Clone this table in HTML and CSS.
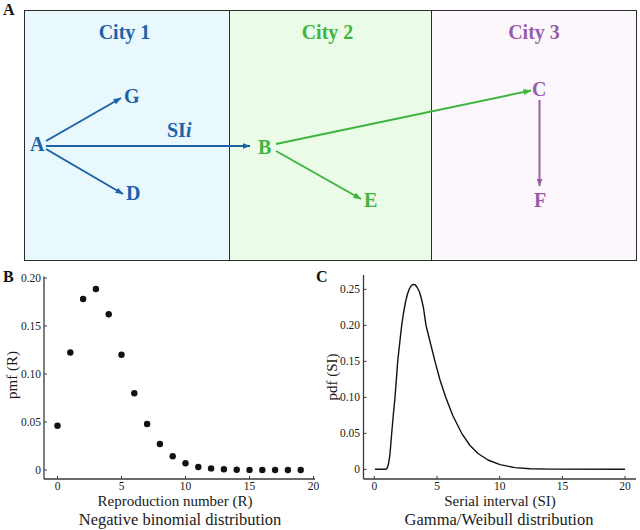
FILE: index.html
```html
<!DOCTYPE html>
<html lang="en">
<head>
<meta charset="utf-8">
<title>Transmission model figure</title>
<link rel="stylesheet" href="styles.css">
</head>
<body>
<div class="figure">
  <section class="panel-a">
    <div class="panel-label">A</div>
    <div class="cities">
      <div class="city city-1"><h2 class="city-title">City 1</h2></div>
      <div class="city city-2"><h2 class="city-title">City 2</h2></div>
      <div class="city city-3"><h2 class="city-title">City 3</h2></div>
    </div>
    <svg class="network" viewBox="0 0 640 265" xmlns="http://www.w3.org/2000/svg">
      <defs>
        <marker id="mb" markerUnits="userSpaceOnUse" markerWidth="8" markerHeight="6" refX="7.5" refY="3" orient="auto"><path d="M0,0 L8,3 L0,6 z" class="head-blue"/></marker>
        <marker id="mg" markerUnits="userSpaceOnUse" markerWidth="8" markerHeight="6" refX="7.5" refY="3" orient="auto"><path d="M0,0 L8,3 L0,6 z" class="head-green"/></marker>
        <marker id="mp" markerUnits="userSpaceOnUse" markerWidth="8" markerHeight="6" refX="7.5" refY="3" orient="auto"><path d="M0,0 L8,3 L0,6 z" class="head-purple"/></marker>
      </defs>
      <line class="edge edge-blue" x1="46" y1="141" x2="121" y2="98" marker-end="url(#mb)"/>
      <line class="edge edge-blue" x1="46" y1="149" x2="123" y2="194" marker-end="url(#mb)"/>
      <line class="edge edge-blue" x1="46" y1="146" x2="250" y2="146" marker-end="url(#mb)"/>
      <line class="edge edge-green" x1="276" y1="144" x2="531" y2="90.5" marker-end="url(#mg)"/>
      <line class="edge edge-green" x1="276" y1="151" x2="361" y2="199" marker-end="url(#mg)"/>
      <line class="edge edge-purple" x1="539.5" y1="100" x2="539.5" y2="186" marker-end="url(#mp)"/>
      <text class="node node-blue" x="30" y="151">A</text>
      <text class="node node-blue" x="124" y="103">G</text>
      <text class="node node-blue" x="126" y="200">D</text>
      <text class="node node-blue" x="167" y="137">SI<tspan class="ital">i</tspan></text>
      <text class="node node-green" x="258" y="154">B</text>
      <text class="node node-green" x="364" y="207">E</text>
      <text class="node node-purple" x="532" y="96">C</text>
      <text class="node node-purple" x="534" y="207">F</text>
    </svg>
  </section>

  <section class="charts">
    <svg class="chart chart-b" viewBox="0 265 312 265" xmlns="http://www.w3.org/2000/svg">
      <text class="plabel" x="3" y="282">B</text>
      <line class="axis" x1="44" y1="276.5" x2="44" y2="479"/>
      <line class="axis" x1="44" y1="479" x2="315" y2="479"/>
      <g class="ticks">
        <line x1="44" y1="470" x2="47" y2="470"/>
        <line x1="44" y1="422" x2="47" y2="422"/>
        <line x1="44" y1="374" x2="47" y2="374"/>
        <line x1="44" y1="326" x2="47" y2="326"/>
        <line x1="44" y1="278" x2="47" y2="278"/>
        <line x1="57.5" y1="479" x2="57.5" y2="476"/>
        <line x1="121.5" y1="479" x2="121.5" y2="476"/>
        <line x1="185.5" y1="479" x2="185.5" y2="476"/>
        <line x1="249.5" y1="479" x2="249.5" y2="476"/>
        <line x1="313.5" y1="479" x2="313.5" y2="476"/>
      </g>
      <g class="ylab">
        <text x="41" y="474">0</text>
        <text x="41" y="426">0.05</text>
        <text x="41" y="378">0.10</text>
        <text x="41" y="330">0.15</text>
        <text x="41" y="282">0.20</text>
      </g>
      <g class="xlab">
        <text x="57.5" y="490">0</text>
        <text x="121.5" y="490">5</text>
        <text x="185.5" y="490">10</text>
        <text x="249.5" y="490">15</text>
        <text x="313.5" y="490">20</text>
      </g>
      <g class="dots">
        <circle cx="57.5" cy="425.8" r="3.2"/>
        <circle cx="70.3" cy="352.5" r="3.2"/>
        <circle cx="83.1" cy="299" r="3.2"/>
        <circle cx="95.9" cy="289" r="3.2"/>
        <circle cx="108.7" cy="314.3" r="3.2"/>
        <circle cx="121.5" cy="354.7" r="3.2"/>
        <circle cx="134.3" cy="393.3" r="3.2"/>
        <circle cx="147.1" cy="424" r="3.2"/>
        <circle cx="159.9" cy="444" r="3.2"/>
        <circle cx="172.7" cy="456.3" r="3.2"/>
        <circle cx="185.5" cy="463.3" r="3.2"/>
        <circle cx="198.3" cy="467" r="3.2"/>
        <circle cx="211.1" cy="468.4" r="3.2"/>
        <circle cx="223.9" cy="469.3" r="3.2"/>
        <circle cx="236.7" cy="469.7" r="3.2"/>
        <circle cx="249.5" cy="469.9" r="3.2"/>
        <circle cx="262.3" cy="470" r="3.2"/>
        <circle cx="275.1" cy="470" r="3.2"/>
        <circle cx="287.9" cy="470" r="3.2"/>
        <circle cx="300.7" cy="470" r="3.2"/>
      </g>
      <text class="ytitle" transform="translate(17 375) rotate(-90)">pmf (R)</text>
      <text class="xtitle" x="175" y="506">Reproduction number (R)</text>
      <text class="caption" x="180" y="524.5">Negative binomial distribution</text>
    </svg>

    <svg class="chart chart-c" viewBox="312 265 328 265" xmlns="http://www.w3.org/2000/svg">
      <text class="plabel" x="316" y="282">C</text>
      <line class="axis" x1="363.5" y1="275" x2="363.5" y2="479"/>
      <line class="axis" x1="363.5" y1="479" x2="636" y2="479"/>
      <g class="ticks">
        <line x1="363.5" y1="469.3" x2="366.5" y2="469.3"/>
        <line x1="363.5" y1="433.3" x2="366.5" y2="433.3"/>
        <line x1="363.5" y1="397.3" x2="366.5" y2="397.3"/>
        <line x1="363.5" y1="361.3" x2="366.5" y2="361.3"/>
        <line x1="363.5" y1="325.3" x2="366.5" y2="325.3"/>
        <line x1="363.5" y1="289.3" x2="366.5" y2="289.3"/>
        <line x1="374.3" y1="479" x2="374.3" y2="476"/>
        <line x1="437" y1="479" x2="437" y2="476"/>
        <line x1="499.7" y1="479" x2="499.7" y2="476"/>
        <line x1="562.4" y1="479" x2="562.4" y2="476"/>
        <line x1="625.1" y1="479" x2="625.1" y2="476"/>
      </g>
      <g class="ylab">
        <text x="360" y="473.3">0</text>
        <text x="360" y="437.3">0.05</text>
        <text x="360" y="401.3">0.10</text>
        <text x="360" y="365.3">0.15</text>
        <text x="360" y="329.3">0.20</text>
        <text x="360" y="293.3">0.25</text>
      </g>
      <g class="xlab">
        <text x="374.3" y="490">0</text>
        <text x="437" y="490">5</text>
        <text x="499.7" y="490">10</text>
        <text x="562.4" y="490">15</text>
        <text x="625.1" y="490">20</text>
      </g>
      <polyline class="curve" points="375,469.3 386,469.3 387,468.5 388.5,464 390,454 391.7,433.3 393.3,415 395,397.3 396.4,379 397.7,361.3 399.7,343 401.7,325.3 403.5,313 405.5,302 407.5,294 409.5,288.5 411.5,285.3 413.3,284.3 415.3,285 417.3,287.5 419.5,292 421.5,299 423.5,308 426,325.3 430.5,343.5 435,361.3 440,380 445.7,397.3 453,416 461.7,433.3 470,445.5 478,453.5 488,460 500,464.6 515,467.6 530,468.7 550,469.1 625,469.3"/>
      <text class="ytitle" transform="translate(337 377) rotate(-90)">pdf (SI)</text>
      <text class="xtitle" x="500" y="506">Serial interval (SI)</text>
      <text class="caption" x="499" y="524.5">Gamma/Weibull distribution</text>
    </svg>
  </section>
</div>
</body>
</html>
```

FILE: styles.css
```css
html, body {
  margin: 0;
  padding: 0;
  background: #ffffff;
}

body {
  font-family: "Liberation Serif", "Times New Roman", serif;
  color: #111111;
}

.figure {
  width: 640px;
  height: 530px;
  overflow: hidden;
}

/* ---------- Panel A ---------- */
.panel-a {
  position: relative;
  height: 265px;
  display: flex;
  align-items: flex-start;
}

.panel-label {
  width: 24px;
  box-sizing: border-box;
  padding: 2px 0 0 3px;
  font-family: "Liberation Serif", "Times New Roman", serif;
  font-size: 16px;
  line-height: 1;
  font-weight: bold;
}

.cities {
  margin-top: 10px;
  width: 613px;
  height: 251px;
  box-sizing: border-box;
  border: 1.5px solid #2b2b2b;
  display: grid;
  grid-template-columns: 205px 202px 1fr;
}

.city {
  box-sizing: border-box;
}

.city-1 {
  background: #e9f8fc;
  border-right: 1.5px solid #2b2b2b;
  color: #1c62a8;
}

.city-2 {
  background: #eafbe8;
  border-right: 1.5px solid #2b2b2b;
  color: #3fb43f;
}

.city-3 {
  background: #fcf7fd;
  color: #9a5ca7;
}

.city-title {
  margin: 0;
  padding-top: 11px;
  font-family: "Liberation Serif", "Times New Roman", serif;
  font-size: 20px;
  line-height: 20px;
  font-weight: bold;
  text-align: center;
}

.city-1 .city-title { padding-right: 5px; }
.city-2 .city-title { padding-right: 6px; }

.network {
  position: absolute;
  left: 0;
  top: 0;
  width: 640px;
  height: 265px;
  pointer-events: none;
}

svg text {
  font-family: "Liberation Serif", "Times New Roman", serif;
}

.edge {
  stroke-width: 2;
  fill: none;
}
.edge-blue { stroke: #1c62a8; }
.edge-green { stroke: #3fb43f; }
.edge-purple { stroke: #9a5ca7; }
.head-blue { fill: #1c62a8; }
.head-green { fill: #3fb43f; }
.head-purple { fill: #9a5ca7; }

.node {
  font-size: 20px;
  font-weight: bold;
}
.node-blue { fill: #1c62a8; }
.node-green { fill: #3fb43f; }
.node-purple { fill: #9a5ca7; }
.ital { font-style: italic; }

/* ---------- Charts B & C ---------- */
.charts {
  display: flex;
  height: 265px;
}

.chart {
  display: block;
  height: 265px;
  overflow: visible;
}

.chart-b { width: 312px; }
.chart-c { width: 328px; }

.plabel {
  font-size: 16px;
  font-weight: bold;
  fill: #111111;
}

.axis {
  stroke: #3a3a3a;
  stroke-width: 1.3;
}

.ticks line {
  stroke: #3a3a3a;
  stroke-width: 1;
}

.ylab text {
  font-size: 11.5px;
  text-anchor: end;
  fill: #1a1a1a;
}

.xlab text {
  font-size: 11.5px;
  text-anchor: middle;
  fill: #1a1a1a;
}

.dots circle {
  fill: #111111;
}

.curve {
  fill: none;
  stroke: #111111;
  stroke-width: 1.4;
  stroke-linejoin: round;
}

.ytitle {
  font-size: 15px;
  text-anchor: middle;
  fill: #1a1a1a;
}

.xtitle {
  font-size: 15px;
  text-anchor: middle;
  fill: #1a1a1a;
}

.caption {
  font-size: 16.5px;
  text-anchor: middle;
  fill: #1a1a1a;
}
```
